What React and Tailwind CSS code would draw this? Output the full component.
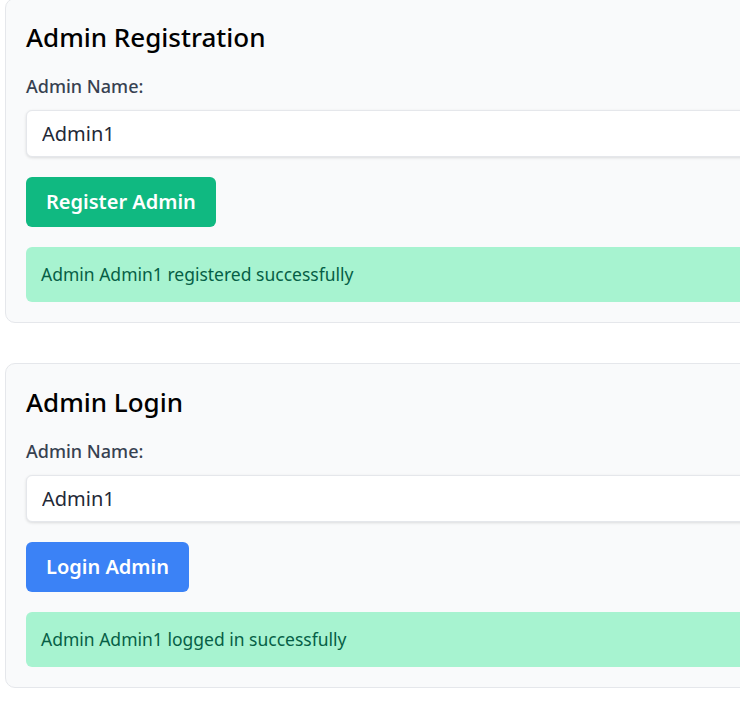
import React, { useState } from 'react';

function AdminCard({ title, buttonLabel, buttonClass, message }) {
  const [name, setName] = useState('Admin1');

  return (
    <section className="rounded-[10px] border border-[#e5e7eb] bg-[#f9fafb] px-5 pt-5 pb-5">
      <h2 className="text-[26px] font-medium leading-[36px] text-black">{title}</h2>
      <label className="mt-[18px] block text-[18px] font-medium leading-[26px] text-[#374151]">
        Admin Name:
      </label>
      <input
        value={name}
        onChange={(e) => setName(e.target.value)}
        className="mt-[11px] block h-[47px] w-full rounded-[6px] border border-[#e5e7eb] bg-white px-[15px] text-[20px] text-[#1f2937] shadow-[0_1px_3px_rgba(0,0,0,0.12)] outline-none"
      />
      <button
        className={`mt-[20px] block h-[50px] rounded-[6px] px-5 text-[20px] font-semibold text-white ${buttonClass}`}
      >
        {buttonLabel}
      </button>
      <div className="mt-[20px] rounded-[6px] bg-[#a7f3d0] px-[15px] py-[15px] text-[17.5px] leading-[25px] text-[#065f46]">
        {message}
      </div>
    </section>
  );
}

export default function App() {
  return (
    <div
      className="h-[702px] w-[740px] overflow-hidden bg-white"
      style={{ fontFamily: '"Noto Sans", "Open Sans", sans-serif' }}
    >
      <div className="ml-[5px] mt-[-2px] flex w-[900px] flex-col gap-10">
        <AdminCard
          title="Admin Registration"
          buttonLabel="Register Admin"
          buttonClass="bg-[#10b981]"
          message="Admin Admin1 registered successfully"
        />
        <AdminCard
          title="Admin Login"
          buttonLabel="Login Admin"
          buttonClass="bg-[#3b82f6]"
          message="Admin Admin1 logged in successfully"
        />
      </div>
    </div>
  );
}
